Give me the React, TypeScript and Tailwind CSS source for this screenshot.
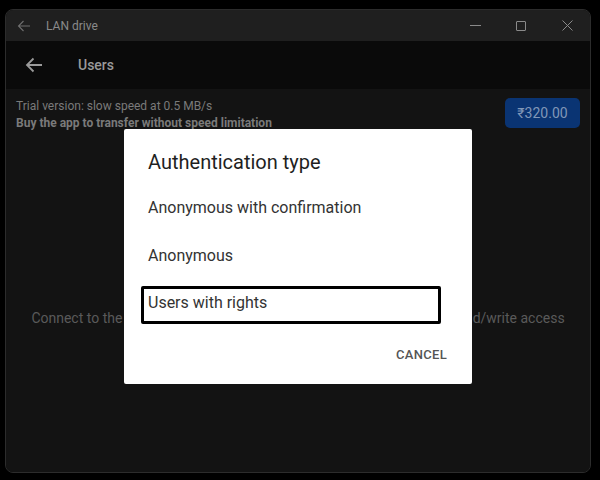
import React from "react";

export default function App() {
  return (
    <div className="w-[600px] h-[480px] bg-black pt-[9px] pl-[5px] overflow-hidden" style={{ fontFamily: "Roboto, 'Noto Sans', sans-serif" }}>
      <div className="relative w-[586px] h-[464px] rounded-[8px] border border-[#2c2c2c] bg-[#121212] overflow-hidden flex flex-col">
        {/* title bar */}
        <div className="h-[31px] bg-[#1f1f1f] flex items-center shrink-0">
          <svg className="ml-[11px]" width="14" height="14" viewBox="0 0 14 14" fill="none" stroke="#6e6e6e" strokeWidth="1.1">
            <path d="M13 7H1.5M6.5 2L1.5 7l5 5" />
          </svg>
          <span className="ml-[15px] text-[12px] text-[#8a8a8a]">LAN drive</span>
          <div className="ml-auto flex items-center">
            <div className="w-[46px] flex justify-center">
              <div className="w-[11px] h-px bg-[#8a8a8a]" />
            </div>
            <div className="w-[46px] flex justify-center">
              <div className="w-[10px] h-[10px] border border-[#8a8a8a] rounded-[1px]" />
            </div>
            <div className="w-[46px] flex justify-center">
              <svg width="11" height="11" viewBox="0 0 11 11" stroke="#8a8a8a" strokeWidth="1">
                <path d="M0.5 0.5l10 10M10.5 0.5l-10 10" />
              </svg>
            </div>
          </div>
        </div>
        {/* toolbar */}
        <div className="h-[48px] bg-[#0a0a0a] flex items-center shrink-0">
          <svg className="ml-[19px]" width="18" height="16" viewBox="0 0 18 16" fill="none" stroke="#9a9a9a" strokeWidth="1.8">
            <path d="M17 8H2M8.5 1.5L2 8l6.5 6.5" />
          </svg>
          <span className="ml-[35px] text-[14px] font-medium text-[#9a9a9a]">Users</span>
        </div>
        {/* content */}
        <div className="flex-1 bg-[#131313] relative">
          <div className="flex items-start justify-between pl-[10px] pr-[10px] pt-[9px]">
            <div className="text-[12px] leading-[16px] text-[#7a7a7a]">
              <div>Trial version: slow speed at 0.5 MB/s</div>
              <div className="font-bold mt-[1px]">Buy the app to transfer without speed limitation</div>
            </div>
            <div className="w-[75px] h-[30px] rounded-[5px] bg-[#0a3473] flex items-center justify-center text-[14px] text-[#8197b8]">
              ₹320.00
            </div>
          </div>
          <div className="mt-[177px] text-center text-[14px] text-[#5a5a5a] whitespace-nowrap">
            Connect to the server using the user accounts defined here with the read/write access
          </div>
        </div>
        {/* dialog */}
        <div className="absolute left-[118px] top-[119px] w-[348px] h-[255px] bg-white rounded-[2px] flex flex-col">
          <div className="pl-[24px] pt-[21px] text-[20px] text-[#1f1f1f] leading-[24px]">Authentication type</div>
          <div className="pl-[24px] mt-[24px] text-[16px] text-[#333] leading-[20px]">Anonymous with confirmation</div>
          <div className="pl-[24px] mt-[28px] text-[16px] text-[#333] leading-[20px]">Anonymous</div>
          <div className="ml-[17px] mt-[20px] w-[300px] h-[38px] border-[3px] border-black rounded-[2px] pl-[4px] pt-[4px] text-[16px] leading-[20px] text-[#333]">
            Users with rights
          </div>
          <div className="flex justify-end pr-[25px] mt-[21px] text-[13px] font-medium text-[#555] tracking-[0.3px]">CANCEL</div>
        </div>
      </div>
    </div>
  );
}
